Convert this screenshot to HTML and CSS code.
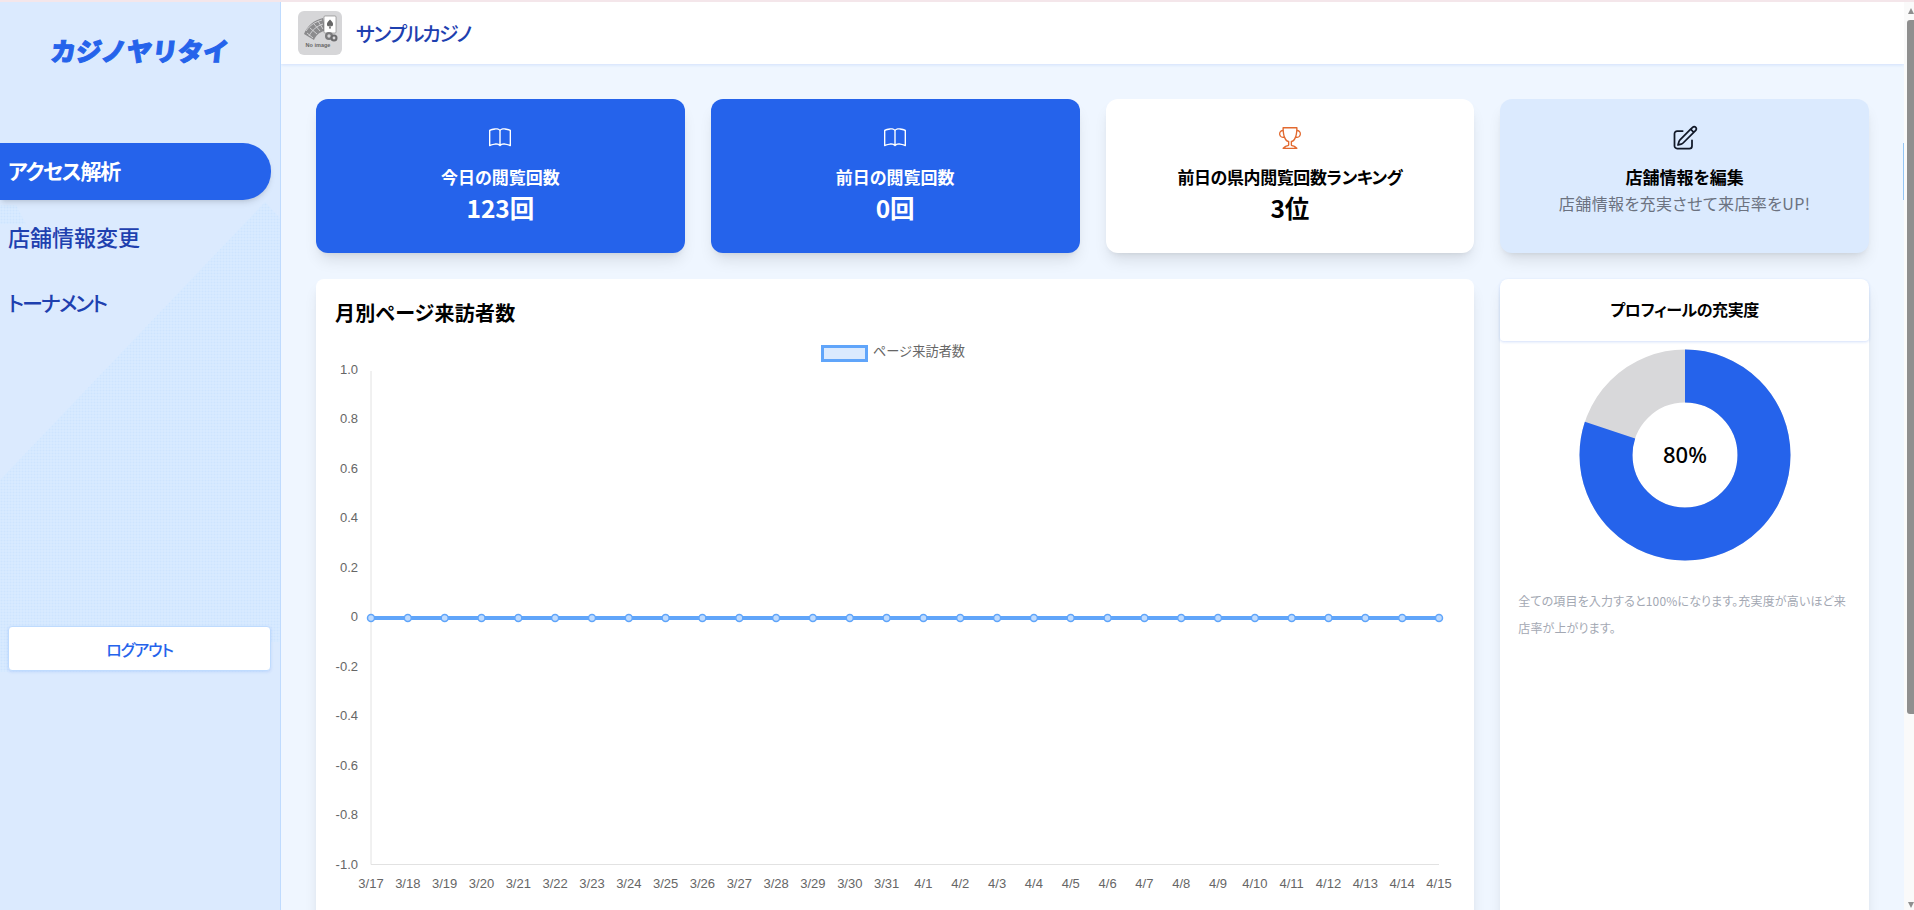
FILE: index.html
```html
<!DOCTYPE html>
<html lang="ja">
<head>
<meta charset="utf-8">
<title>カジノヤリタイ</title>
<link rel="stylesheet" href="styles.css">
</head>
<body>
<div class="app">
  <aside class="sidebar">
    <div class="pattern"></div>
    <div class="logo">カジノヤリタイ</div>
    <nav class="nav">
      <a class="nav-item active">アクセス解析</a>
      <a class="nav-item">店舗情報変更</a>
      <a class="nav-item kana">トーナメント</a>
    </nav>
    <button class="logout">ログアウト</button>
  </aside>
  <main class="main">
    <header class="topbar">
      <svg class="thumb" viewBox="0 0 44 44">
        <rect width="44" height="44" rx="6" fill="#d6d6d8"/>
        <path d="M6 23 C9 15 16 9 25 7 L27 17 L26 20 C22 21 18 24 16 29 Z" fill="#8b8b8d"/>
        <path d="M9 22 L15 27 M12 17 L19 23 M16 13 L22 20 M20 10 L25 18 M8 20 C12 14 17 11 24 9 M11 25 C14 19 19 15 25 13" stroke="#d6d6d8" stroke-width=".9" fill="none"/>
        <rect x="26" y="5" width="12" height="17" rx="1" fill="#fff" stroke="#777" stroke-width=".6"/>
        <path d="M32 8.5 C33.5 10.5 35.5 11.5 35 14 C34.6 15.5 33 15.5 32.4 14.6 L33 17.5 H31 L31.6 14.6 C31 15.5 29.4 15.5 29 14 C28.500 11.500 30.500 10.500 32 8.500 Z" fill="#666"/>
        <circle cx="31" cy="25" r="4" fill="#7a7a7c"/><circle cx="31" cy="25" r="1.700" fill="#d6d6d8"/>
        <circle cx="36" cy="27" r="3.500" fill="#6c6c6e"/><circle cx="36" cy="27" r="1.400" fill="#d6d6d8"/>
        <text class="thumb-label" x="20" y="36" text-anchor="middle">No image</text>
      </svg>
      <h1 class="shop-name">サンプルカジノ</h1>
    </header>
    <div class="content">
      <section class="stat-card blue">
        <svg class="icon" viewBox="0 0 16 16" fill="currentColor"><path d="M1 2.828c.885-.37 2.154-.769 3.388-.893 1.33-.134 2.458.063 3.112.752v9.746c-.935-.53-2.12-.603-3.213-.493-1.18.12-2.37.461-3.287.811zm7.5-.141c.654-.689 1.782-.886 3.112-.752 1.234.124 2.503.523 3.388.893v9.923c-.918-.35-2.107-.692-3.287-.81-1.094-.111-2.278-.039-3.213.492zM8 1.783C7.015.936 5.587.81 4.287.94c-1.514.153-3.042.672-3.994 1.105A.5.5 0 0 0 0 2.5v11a.5.5 0 0 0 .707.455c.882-.4 2.303-.881 3.68-1.02 1.409-.142 2.59.087 3.223.877a.5.5 0 0 0 .78 0c.633-.79 1.814-1.019 3.222-.877 1.378.139 2.8.62 3.681 1.02A.5.5 0 0 0 16 13.5v-11a.5.5 0 0 0-.293-.455c-.952-.433-2.48-.952-3.994-1.105C10.413.809 8.985.936 8 1.783"/></svg>
        <div class="stat-title">今日の閲覧回数</div>
        <div class="stat-value">123回</div>
      </section>
      <section class="stat-card blue">
        <svg class="icon" viewBox="0 0 16 16" fill="currentColor"><path d="M1 2.828c.885-.37 2.154-.769 3.388-.893 1.33-.134 2.458.063 3.112.752v9.746c-.935-.53-2.12-.603-3.213-.493-1.18.12-2.37.461-3.287.811zm7.5-.141c.654-.689 1.782-.886 3.112-.752 1.234.124 2.503.523 3.388.893v9.923c-.918-.35-2.107-.692-3.287-.81-1.094-.111-2.278-.039-3.213.492zM8 1.783C7.015.936 5.587.81 4.287.94c-1.514.153-3.042.672-3.994 1.105A.5.5 0 0 0 0 2.5v11a.5.5 0 0 0 .707.455c.882-.4 2.303-.881 3.68-1.02 1.409-.142 2.59.087 3.223.877a.5.5 0 0 0 .78 0c.633-.79 1.814-1.019 3.222-.877 1.378.139 2.8.62 3.681 1.02A.5.5 0 0 0 16 13.5v-11a.5.5 0 0 0-.293-.455c-.952-.433-2.48-.952-3.994-1.105C10.413.809 8.985.936 8 1.783"/></svg>
        <div class="stat-title">前日の閲覧回数</div>
        <div class="stat-value">0回</div>
      </section>
      <section class="stat-card white">
        <svg class="icon trophy" viewBox="0 0 16 16" fill="currentColor"><path d="M2.5.5A.5.5 0 0 1 3 0h10a.5.5 0 0 1 .5.5q0 .807-.034 1.536a3 3 0 1 1-1.133 5.89c-.79 1.865-1.878 2.777-2.833 3.011v2.173l1.425.356c.194.048.377.135.537.255L13.3 15.1a.5.5 0 0 1-.3.9H3a.5.5 0 0 1-.3-.9l1.838-1.379c.16-.12.343-.207.537-.255L6.5 13.11v-2.173c-.955-.234-2.043-1.146-2.833-3.012a3 3 0 1 1-1.132-5.89A33 33 0 0 1 2.5.5m.099 2.54a2 2 0 0 0 .72 3.935c-.333-1.05-.588-2.346-.72-3.935m10.083 3.935a2 2 0 0 0 .72-3.935c-.133 1.59-.388 2.885-.72 3.935M3.504 1q.01.775.056 1.469c.13 2.028.457 3.546.87 4.667C5.294 9.48 6.484 10 7 10a.5.5 0 0 1 .5.5v2.61a1 1 0 0 1-.757.97l-1.426.356a.5.5 0 0 0-.179.085L4.5 15h7l-.638-.479a.5.5 0 0 0-.18-.085l-1.425-.356a1 1 0 0 1-.757-.97V10.5A.5.5 0 0 1 9 10c.516 0 1.706-.52 2.57-2.864.413-1.12.74-2.64.87-4.667q.046-.694.056-1.469z"/></svg>
        <div class="stat-title rank">前日の県内閲覧回数ランキング</div>
        <div class="stat-value">3位</div>
      </section>
      <section class="stat-card pale">
        <svg class="icon edit" viewBox="0 0 24 24" fill="none" stroke="currentColor" stroke-width="1.500" stroke-linecap="round" stroke-linejoin="round"><path d="m16.862 4.487 1.687-1.688a1.875 1.875 0 1 1 2.652 2.652L10.582 16.07a4.500 4.500 0 0 1-1.897 1.13L6 18l.8-2.685a4.500 4.500 0 0 1 1.13-1.897l8.932-8.931Zm0 0L19.500 7.125M18 14v4.750A2.250 2.250 0 0 1 15.750 21H5.250A2.250 2.250 0 0 1 3 18.750V8.250A2.250 2.250 0 0 1 5.250 6H10"/></svg>
        <div class="stat-title">店舗情報を編集</div>
        <div class="stat-sub">店舗情報を充実させて来店率をUP!</div>
      </section>

      <section class="chart-card">
        <h2 class="chart-title">月別ページ来訪者数</h2>
        <svg class="chart" viewBox="316 335 1159 575">
          <rect class="legend-box" x="822.500" y="346.500" width="44" height="14"/>
          <text class="legend-text" x="873" y="356">ページ来訪者数</text>
          <path class="axis" d="M371 371V864.500H1439"/>
          <g class="y-labels">
            <text x="358" y="374">1.0</text><text x="358" y="423">0.8</text><text x="358" y="473">0.6</text><text x="358" y="522">0.4</text><text x="358" y="572">0.2</text><text x="358" y="621">0</text><text x="358" y="671">-0.2</text><text x="358" y="720">-0.4</text><text x="358" y="770">-0.6</text><text x="358" y="819">-0.8</text><text x="358" y="869">-1.0</text>
          </g>
          <path class="line" d="M371 618H1439"/>
          <g class="points">
            <circle cx="371" cy="618" r="3.500"/><circle cx="407.800" cy="618" r="3.500"/><circle cx="444.700" cy="618" r="3.500"/><circle cx="481.500" cy="618" r="3.500"/><circle cx="518.300" cy="618" r="3.500"/><circle cx="555.100" cy="618" r="3.500"/><circle cx="592" cy="618" r="3.500"/><circle cx="628.800" cy="618" r="3.500"/><circle cx="665.600" cy="618" r="3.500"/><circle cx="702.400" cy="618" r="3.500"/><circle cx="739.300" cy="618" r="3.500"/><circle cx="776.100" cy="618" r="3.500"/><circle cx="812.900" cy="618" r="3.500"/><circle cx="849.800" cy="618" r="3.500"/><circle cx="886.600" cy="618" r="3.500"/><circle cx="923.400" cy="618" r="3.500"/><circle cx="960.200" cy="618" r="3.500"/><circle cx="997.100" cy="618" r="3.500"/><circle cx="1033.900" cy="618" r="3.500"/><circle cx="1070.700" cy="618" r="3.500"/><circle cx="1107.600" cy="618" r="3.500"/><circle cx="1144.400" cy="618" r="3.500"/><circle cx="1181.200" cy="618" r="3.500"/><circle cx="1218" cy="618" r="3.500"/><circle cx="1254.900" cy="618" r="3.500"/><circle cx="1291.700" cy="618" r="3.500"/><circle cx="1328.500" cy="618" r="3.500"/><circle cx="1365.300" cy="618" r="3.500"/><circle cx="1402.200" cy="618" r="3.500"/><circle cx="1439" cy="618" r="3.500"/>
          </g>
          <g class="x-labels">
            <text x="371" y="888">3/17</text><text x="407.800" y="888">3/18</text><text x="444.700" y="888">3/19</text><text x="481.500" y="888">3/20</text><text x="518.300" y="888">3/21</text><text x="555.100" y="888">3/22</text><text x="592" y="888">3/23</text><text x="628.800" y="888">3/24</text><text x="665.600" y="888">3/25</text><text x="702.400" y="888">3/26</text><text x="739.300" y="888">3/27</text><text x="776.100" y="888">3/28</text><text x="812.900" y="888">3/29</text><text x="849.800" y="888">3/30</text><text x="886.600" y="888">3/31</text><text x="923.400" y="888">4/1</text><text x="960.200" y="888">4/2</text><text x="997.100" y="888">4/3</text><text x="1033.900" y="888">4/4</text><text x="1070.700" y="888">4/5</text><text x="1107.600" y="888">4/6</text><text x="1144.400" y="888">4/7</text><text x="1181.200" y="888">4/8</text><text x="1218" y="888">4/9</text><text x="1254.900" y="888">4/10</text><text x="1291.700" y="888">4/11</text><text x="1328.500" y="888">4/12</text><text x="1365.300" y="888">4/13</text><text x="1402.200" y="888">4/14</text><text x="1439" y="888">4/15</text>
          </g>
        </svg>
      </section>

      <section class="profile-card">
        <h2 class="profile-head">プロフィールの充実度</h2>
        <svg class="donut" viewBox="0 0 212 212">
          <circle class="donut-rest" cx="106" cy="106" r="79"/>
          <circle class="donut-value" cx="106" cy="106" r="79" transform="rotate(-90 106 106)"/>
          <text class="donut-text" x="106" y="114">80%</text>
        </svg>
        <p class="profile-note">全ての項目を入力すると100%になります。充実度が高いほど来店率が上がります。</p>
      </section>
    </div>
  </main>
  <div class="scrollbar">
    <div class="scroll-up"></div>
    <div class="scroll-thumb"></div>
    <div class="scroll-down"></div>
    <div class="scroll-mark"></div>
  </div>
</div>
</body>
</html>
```

FILE: styles.css
```css
* { box-sizing: border-box; }
html, body { margin: 0; height: 100%; overflow: hidden; }
body {
  font-family: "Noto Sans CJK JP", "Noto Sans", sans-serif;
  font-feature-settings: "palt";
  color: #000;
  background: #eff6ff;
}
.app {
  display: flex;
  height: 910px;
  border-top: 2px solid #f4e6ea;
}
.sidebar {
  position: relative;
  flex: 0 0 281px;
  display: flex;
  flex-direction: column;
  background: #dbeafe;
  border-right: 1px solid #bfdbfe;
}
.pattern {
  position: absolute;
  inset: 0;
  background-color: #dcecff;
  background-image:
    radial-gradient(circle, #cee4fe 0.9px, transparent 1.1px),
    radial-gradient(circle, #d3e7fe 0.9px, transparent 1.1px);
  background-size: 3px 3px;
  background-position: 0 0, 1.5px 1.5px;
  clip-path: polygon(0 203px, 16px 203px, 26px 222px, 0 222px, 0 478px, 265px 200px, 280px 216px, 280px 640px, 265px 640px, 265px 670px, 0 670px);
}
.logo {
  position: relative;
  margin-top: 30px;
  height: 36px;
  line-height: 36px;
  text-align: center;
  font-size: 25.500px;
  font-weight: 900;
  color: #2563eb;
  -webkit-text-stroke: 1px #2563eb;
  transform: skewX(-6deg);
  font-feature-settings: normal;
}
.nav {
  position: relative;
  margin-top: 75px;
  display: flex;
  flex-direction: column;
  gap: 9px;
}
.nav-item {
  height: 57px;
  line-height: 55px;
  padding-left: 8px;
  margin-right: 9px;
  font-size: 22px;
  font-weight: 500;
  color: #1e40af;
}
.nav-item.kana { font-size: 21px; letter-spacing: -2px; }
.nav-item.active {
  color: #fff;
  font-weight: 600;
  font-size: 21px;
  letter-spacing: -1.200px;
  background: #2563eb;
  border-radius: 0 28px 28px 0;
  box-shadow: 0 4px 6px -1px rgba(0,0,0,.1), 0 2px 4px -2px rgba(0,0,0,.1);
}
.logout {
  position: relative;
  margin: 294px 9px 0 8px;
  height: 45px;
  font: 500 16px "Noto Sans CJK JP", sans-serif;
  font-feature-settings: "palt";
  letter-spacing: -1px;
  color: #2563eb;
  background: #fff;
  border: 1px solid #bfdbfe;
  border-radius: 4px;
  box-shadow: 0 1px 3px rgba(37,99,235,.15);
}
.main {
  flex: 1;
  min-width: 0;
  display: flex;
  flex-direction: column;
  overflow: hidden;
}
.topbar {
  position: relative;
  flex: 0 0 62px;
  display: flex;
  align-items: center;
  gap: 14px;
  padding-left: 17px;
  background: #fff;
  box-shadow: 0 1px 3px rgba(37,99,235,.14);
}
.thumb { width: 44px; height: 44px; flex: none; }
.thumb-label { font: 700 5.500px "Liberation Sans", sans-serif; fill: #666; }
.shop-name {
  margin: 0;
  font-size: 20px;
  font-weight: 500;
  letter-spacing: -1.600px;
  color: #1e40af;
}
.content {
  flex: 1;
  display: grid;
  grid-template-columns: repeat(4, 1fr);
  grid-template-rows: 154px 700px;
  gap: 26px 26px;
  padding: 35px 35px 0;
}
.stat-card {
  display: flex;
  flex-direction: column;
  align-items: center;
  padding-top: 28px;
  border-radius: 12px;
  box-shadow: 0 10px 15px -3px rgba(0,0,0,.1), 0 4px 6px -4px rgba(0,0,0,.1);
}
.stat-card.blue { background: #2563eb; color: #fff; }
.stat-card.white { background: #fff; color: #000; }
.stat-card.pale { background: #dbeafe; color: #000; }
.icon { width: 22px; height: 22px; flex: none; }
.icon.trophy { color: #e2692f; }
.icon.edit { color: #111827; width: 28px; height: 28px; margin: -3px 0 -3px; }
.stat-title {
  margin-top: 16px;
  height: 24px;
  line-height: 24px;
  font-size: 17px;
  font-weight: 600;
}
.stat-title.rank { letter-spacing: -.4px; }
.stat-value {
  margin-top: 2px;
  height: 34px;
  line-height: 34px;
  font-size: 24.500px;
  font-weight: 600;
}
.stat-sub {
  margin-top: 2px;
  height: 24px;
  line-height: 24px;
  font-size: 16px;
  letter-spacing: .4px;
  color: #6b7280;
}
.chart-card {
  grid-column: span 3;
  background: #fff;
  border-radius: 8px;
  box-shadow: 0 10px 15px -3px rgba(0,0,0,.1), 0 4px 6px -4px rgba(0,0,0,.1);
}
.chart-title {
  margin: 0;
  padding: 20px 0 0 19px;
  height: 56px;
  line-height: 28px;
  font-size: 20px;
  font-weight: 600;
  letter-spacing: .25px;
}
.chart { display: block; width: 1159px; height: 575px; }
.legend-box { fill: #dbeafe; stroke: #60a5fa; stroke-width: 3; }
.legend-text { font-size: 13.200px; fill: #666; font-feature-settings: normal; }
.axis { fill: none; stroke: #e2e2e2; stroke-width: 1; }
.line { fill: none; stroke: #60a5fa; stroke-width: 4; }
.points circle { fill: #bfdbfe; stroke: #60a5fa; stroke-width: 1.500; }
.y-labels text, .x-labels text { font: 13px "Liberation Sans", sans-serif; fill: #666; }
.y-labels text { text-anchor: end; }
.x-labels text { text-anchor: middle; }
.profile-card {
  background: #fff;
  border-radius: 8px;
  box-shadow: 0 10px 15px -3px rgba(0,0,0,.1), 0 4px 6px -4px rgba(0,0,0,.1);
}
.profile-head {
  margin: 0;
  height: 62px;
  line-height: 60px;
  text-align: center;
  font-size: 16px;
  font-weight: 600;
  letter-spacing: -.4px;
  border-radius: 8px 8px 4px 4px;
  box-shadow: 0 1px 3px rgba(37,99,235,.2);
}
.donut { display: block; width: 212px; height: 212px; margin: 8px auto 0; }
.donut-rest { fill: none; stroke: #d8d8da; stroke-width: 53; }
.donut-value { fill: none; stroke: #2563eb; stroke-width: 53; stroke-dasharray: 397 100; }
.donut-text { font: 500 22px "Noto Sans", sans-serif; text-anchor: middle; fill: #000; }
.profile-note {
  margin: 26px 18px 0;
  font-size: 12px;
  letter-spacing: .15px;
  line-height: 27px;
  color: #a3a8b3;
}
.scrollbar {
  position: relative;
  flex: 0 0 10px;
  display: flex;
  flex-direction: column;
  align-items: flex-end;
  background: #fafafa;
}
.scroll-up {
  margin-top: 6px;
  width: 0; height: 0;
  border-left: 3.500px solid transparent;
  border-right: 3.500px solid transparent;
  border-bottom: 6px solid #8f8f8f;
}
.scroll-thumb {
  margin-top: 6px;
  width: 7px;
  height: 694px;
  background: #8f8f8f;
  border-radius: 3px 0 0 3px;
}
.scroll-down {
  margin-top: 188px;
  width: 0; height: 0;
  border-left: 3.500px solid transparent;
  border-right: 3.500px solid transparent;
  border-top: 6px solid #8f8f8f;
}
.scroll-mark {
  position: absolute;
  left: -1px;
  top: 141px;
  width: 1px;
  height: 57px;
  background: #93c5f5;
}
```
